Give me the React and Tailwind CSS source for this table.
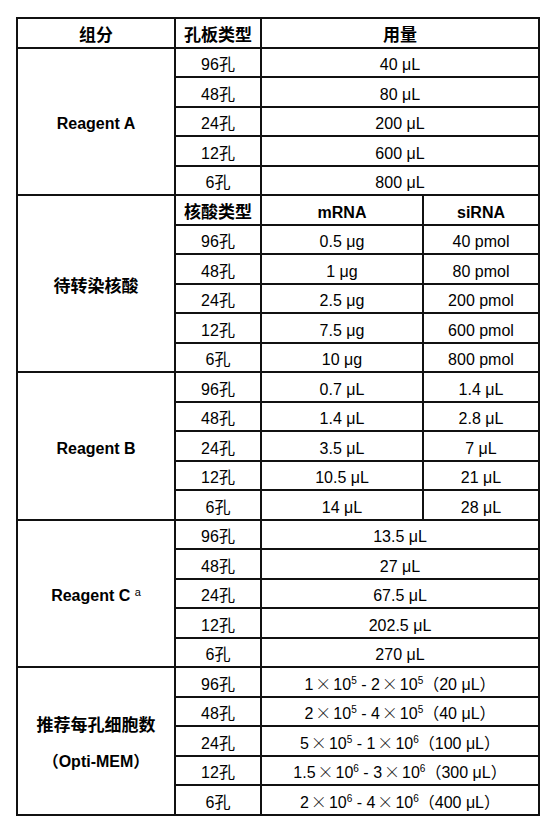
import React from 'react'

const wells = ['96孔', '48孔', '24孔', '12孔', '6孔']

const reagentA = ['40 μL', '80 μL', '200 μL', '600 μL', '800 μL']
const nucleic = [
  ['0.5 μg', '40 pmol'],
  ['1 μg', '80 pmol'],
  ['2.5 μg', '200 pmol'],
  ['7.5 μg', '600 pmol'],
  ['10 μg', '800 pmol'],
]
const reagentB = [
  ['0.7 μL', '1.4 μL'],
  ['1.4 μL', '2.8 μL'],
  ['3.5 μL', '7 μL'],
  ['10.5 μL', '21 μL'],
  ['14 μL', '28 μL'],
]
const reagentC = ['13.5 μL', '27 μL', '67.5 μL', '202.5 μL', '270 μL']
const cells = [
  ['1', '10', '5', '2', '10', '5', '20 μL'],
  ['2', '10', '5', '4', '10', '5', '40 μL'],
  ['5', '10', '5', '1', '10', '6', '100 μL'],
  ['1.5', '10', '6', '3', '10', '6', '300 μL'],
  ['2', '10', '6', '4', '10', '6', '400 μL'],
]

const td = 'border-2 border-[#111] text-center align-middle pt-[6px] pb-0 px-1 leading-[20px] whitespace-nowrap'
const tr = 'h-[29.5px]'

function Times() {
  return (
    <span style={{ fontFamily: '"Noto Sans CJK SC", sans-serif' }} className="text-[16px] leading-none font-light px-[2px] text-[#222]">
      ×
    </span>
  )
}

function Sci({ a, b, e }) {
  return (
    <span>
      {a}
      <Times />
      {b}
      <sup className="text-[10px] leading-none top-[-0.6em]">{e}</sup>
    </span>
  )
}

export default function App() {
  return (
    <div
      className="bg-white min-h-screen pl-[16px] pt-[17px] text-black text-[16px]"
      style={{ fontFamily: '"Liberation Sans", "Noto Sans CJK SC", sans-serif' }}
    >
      <table className="table-fixed border-collapse w-[522px]">
        <colgroup>
          <col className="w-[158px]" />
          <col className="w-[86px]" />
          <col className="w-[162px]" />
          <col className="w-[116px]" />
        </colgroup>
        <tbody>
          <tr className={tr}>
            <td className={`${td} font-bold text-[17px]`}>组分</td>
            <td className={`${td} font-bold text-[17px]`}>孔板类型</td>
            <td className={`${td} font-bold text-[17px]`} colSpan={2}>用量</td>
          </tr>

          {reagentA.map((v, i) => (
            <tr key={'a' + i} className={tr}>
              {i === 0 && (
                <td className={`${td} font-bold`} rowSpan={5}>Reagent A</td>
              )}
              <td className={td}>{wells[i]}</td>
              <td className={td} colSpan={2}>{v}</td>
            </tr>
          ))}

          <tr className={tr}>
            <td className={`${td} font-bold text-[17px]`} rowSpan={6}>待转染核酸</td>
            <td className={`${td} font-bold text-[17px]`}>核酸类型</td>
            <td className={`${td} font-bold`}>mRNA</td>
            <td className={`${td} font-bold`}>siRNA</td>
          </tr>
          {nucleic.map((v, i) => (
            <tr key={'n' + i} className={tr}>
              <td className={td}>{wells[i]}</td>
              <td className={td}>{v[0]}</td>
              <td className={td}>{v[1]}</td>
            </tr>
          ))}

          {reagentB.map((v, i) => (
            <tr key={'b' + i} className={tr}>
              {i === 0 && (
                <td className={`${td} font-bold`} rowSpan={5}>Reagent B</td>
              )}
              <td className={td}>{wells[i]}</td>
              <td className={td}>{v[0]}</td>
              <td className={td}>{v[1]}</td>
            </tr>
          ))}

          {reagentC.map((v, i) => (
            <tr key={'c' + i} className={tr}>
              {i === 0 && (
                <td className={`${td} font-bold`} rowSpan={5}>
                  Reagent C <sup className="text-[11px] font-normal top-[-0.5em]">a</sup>
                </td>
              )}
              <td className={td}>{wells[i]}</td>
              <td className={td} colSpan={2}>{v}</td>
            </tr>
          ))}

          {cells.map((c, i) => (
            <tr key={'m' + i} className={tr}>
              {i === 0 && (
                <td className={`${td} font-bold text-[17px]`} rowSpan={5}>
                  <div className="leading-[36px]">推荐每孔细胞数</div>
                  <div className="leading-[36px] text-[16px]">（Opti-MEM）</div>
                </td>
              )}
              <td className={td}>{wells[i]}</td>
              <td className={td} colSpan={2}>
                <Sci a={c[0]} b={c[1]} e={c[2]} />
                {' - '}
                <Sci a={c[3]} b={c[4]} e={c[5]} />
                （{c[6]}）
              </td>
            </tr>
          ))}
        </tbody>
      </table>
    </div>
  )
}
